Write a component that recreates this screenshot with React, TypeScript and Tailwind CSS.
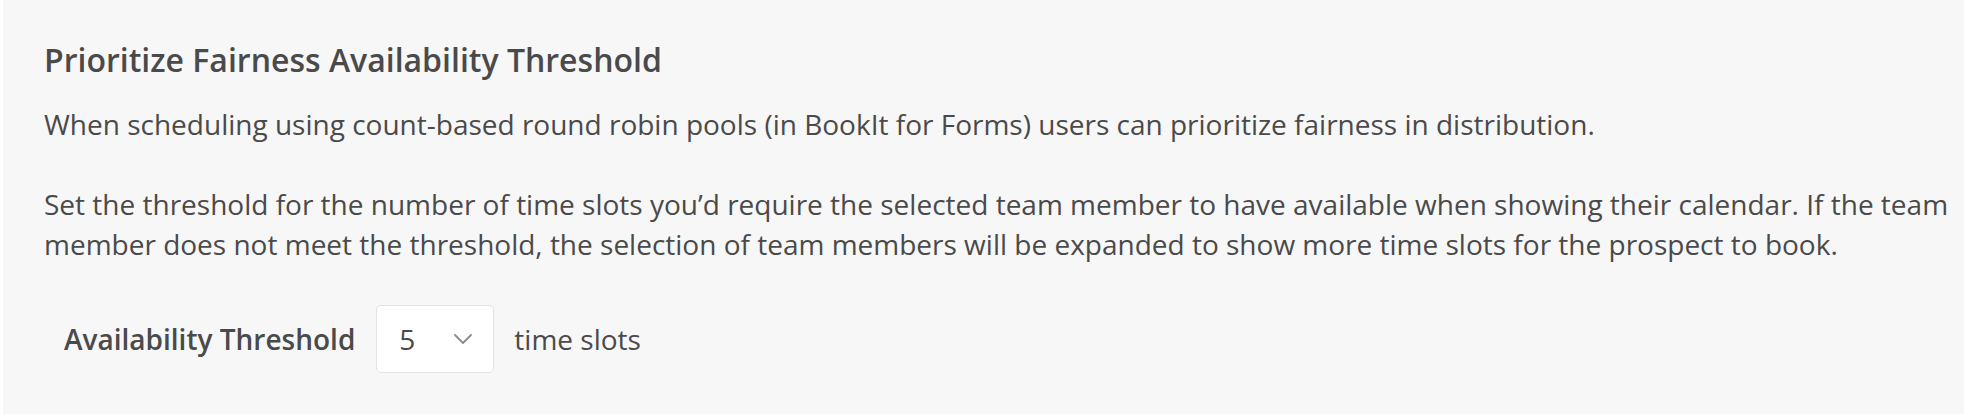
import React from "react";

export default function App() {
  return (
    <div className="min-h-[414px] w-full bg-white">
      <div className="ml-[3px] min-h-[414px] bg-[#f7f7f7] pl-[41px] pr-[4px] pt-[38px] pb-[41px] font-['Open_Sans',sans-serif] text-[#4a4a4a]">
        <h2 className="text-[32px] leading-[44px] font-semibold">Prioritize Fairness Availability Threshold</h2>
        <p className="mt-[22px] text-[28px] leading-[40px]">
          When scheduling using count-based round robin pools (in BookIt for Forms) users can prioritize fairness in distribution.
        </p>
        <p className="mt-[40px] text-[28px] leading-[40px]">
          Set the threshold for the number of time slots you’d require the selected team member to have available when showing their calendar. If the team member does not meet the threshold, the selection of team members will be expanded to show more time slots for the prospect to book.
        </p>
        <div className="mt-[41px] flex items-center pl-[20px]">
          <span className="text-[28px] leading-[40px] font-semibold">Availability Threshold</span>
          <div className="ml-[21px] flex h-[68px] w-[118px] items-center justify-between rounded-[5px] border border-[#e3e3e3] bg-white pl-[22px] pr-[21px]">
            <span className="text-[28px] leading-[40px]">5</span>
            <svg width="18" height="10" viewBox="0 0 18 10" fill="none">
              <path d="M1 1L9 9L17 1" stroke="#8a8a8a" strokeWidth="1.8" strokeLinecap="round" strokeLinejoin="round" />
            </svg>
          </div>
          <span className="ml-[20px] text-[28px] leading-[40px]">time slots</span>
        </div>
      </div>
    </div>
  );
}
